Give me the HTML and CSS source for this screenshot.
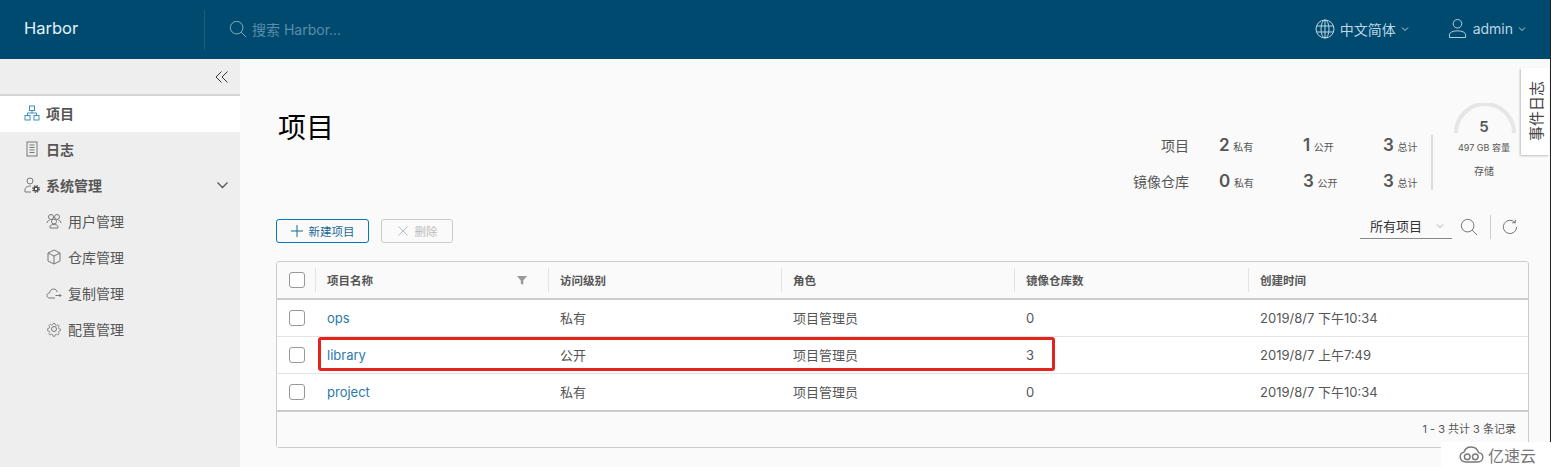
FILE: index.html
```html
<!DOCTYPE html>
<html lang="zh-CN">
<head>
  <meta charset="UTF-8">
  <title>Harbor</title>
  <link rel="stylesheet" href="styles.css">
</head>
<body>
  <header class="topbar">
    <div class="brand">Harbor</div>
    <div class="search">
      <svg class="search-icon" viewBox="0 0 20 20"><circle cx="8.5" cy="8.5" r="7"/><path d="M13.5 13.5l5.5 5.5"/></svg>
      <span>搜索 Harbor...</span>
    </div>
    <div class="top-right">
      <div class="top-item lang">
        <svg class="globe" viewBox="0 0 20 20"><circle cx="10" cy="10" r="9"/><ellipse cx="10" cy="10" rx="4" ry="9"/><path d="M10 1v18M1.8 7h16.4M1.8 13h16.4"/></svg>
        <span>中文简体</span>
        <svg class="caret" viewBox="0 0 8 6"><path d="M1 1.5l3 3 3-3"/></svg>
      </div>
      <div class="top-item user">
        <svg class="avatar" viewBox="0 0 20 22"><circle cx="10" cy="6" r="4.5"/><path d="M1.5 20.5v-3c0-2.5 4-4 8.500-4s8.500 1.500 8.500 4v3z"/></svg>
        <span>admin</span>
        <svg class="caret" viewBox="0 0 8 6"><path d="M1 1.500l3 3 3-3"/></svg>
      </div>
    </div>
  </header>

  <div class="layout">
    <nav class="sidebar">
      <div class="collapse">
        <svg viewBox="0 0 14 14"><path d="M6.500 1.500L1 7l5.500 5.500M12.500 1.500L7 7l5.500 5.500"/></svg>
      </div>
      <a class="nav-item active">
        <svg class="nav-icon blue" viewBox="0 0 16 16"><rect x="5.500" y="1" width="5" height="4.500"/><rect x="1" y="10.500" width="5" height="4.500"/><rect x="10" y="10.500" width="5" height="4.500"/><path d="M8 5.500V8M3.500 10.500V8h9v2.500"/></svg>
        <span>项目</span>
      </a>
      <a class="nav-item">
        <svg class="nav-icon" viewBox="0 0 16 16"><rect x="3" y="1" width="10" height="14"/><path d="M5.500 4h5M5.500 6.500h5M5.500 9h5M5.500 11.500h5"/></svg>
        <span>日志</span>
      </a>
      <a class="nav-item">
        <svg class="nav-icon" viewBox="0 0 16 16"><circle cx="6" cy="4" r="3"/><path d="M1 15v-2.500C1 10.500 3.500 9 7 9M1 15h6"/><circle class="gear-ring" cx="12" cy="12" r="2"/><circle class="gear-teeth" cx="12" cy="12" r="3.300"/></svg>
        <span>系统管理</span>
        <svg class="chevron" viewBox="0 0 12 8"><path d="M1 1.500l5 5 5-5"/></svg>
      </a>
      <a class="nav-sub">
        <svg class="nav-icon" viewBox="0 0 16 16"><circle cx="5" cy="4" r="2.500"/><circle cx="11" cy="4" r="2.500"/><circle cx="8" cy="8.500" r="2.500"/><path d="M1 10c0-1.500 1-2.500 2.500-2.500M15 10c0-1.500-1-2.500-2.500-2.500M4 15v-1.500c0-1 1.500-2 4-2s4 1 4 2V15z"/></svg>
        <span>用户管理</span>
      </a>
      <a class="nav-sub">
        <svg class="nav-icon" viewBox="0 0 16 16"><path d="M8 1l6 3v8l-6 3-6-3V4zM2 4l6 3 6-3M8 7v8"/></svg>
        <span>仓库管理</span>
      </a>
      <a class="nav-sub">
        <svg class="nav-icon" viewBox="0 0 16 16"><path d="M9 13H3.500C2 13 1 12 1 10.500S2 8 3.500 8C4 5.500 5.500 4 7.500 4c2 0 3.300 1.200 3.800 3M9.500 10.500H15M13.500 9l1.500 1.500-1.500 1.500"/></svg>
        <span>复制管理</span>
      </a>
      <a class="nav-sub">
        <svg class="nav-icon" viewBox="0 0 16 16"><circle cx="8" cy="8" r="2.500"/><path d="M6.800 1h2.400l.4 2 1.500.7 1.800-1.100 1.600 1.700-1.100 1.700.6 1.500 2 .5v2.200l-2 .5-.6 1.500 1.100 1.700-1.600 1.700-1.800-1.100-1.500.6-.4 2H6.800l-.4-2-1.500-.6-1.800 1.100-1.600-1.700 1.100-1.700-.6-1.500-2-.5V7.500l2-.5.600-1.500-1.100-1.700 1.600-1.700 1.800 1.100 1.500-.7z" transform="translate(1.600 1.600) scale(.8)"/></svg>
        <span>配置管理</span>
      </a>
    </nav>

    <main class="content">
      <div class="page-head">
        <h1>项目</h1>
        <div class="summary">
          <div class="counts">
            <div class="count-row">
              <span class="count-label">项目</span>
              <span class="count"><b>2</b> <small>私有</small></span>
              <span class="count"><b>1</b> <small>公开</small></span>
              <span class="count"><b>3</b> <small>总计</small></span>
            </div>
            <div class="count-row">
              <span class="count-label">镜像仓库</span>
              <span class="count"><b>0</b> <small>私有</small></span>
              <span class="count"><b>3</b> <small>公开</small></span>
              <span class="count"><b>3</b> <small>总计</small></span>
            </div>
          </div>
          <div class="storage">
            <svg class="gauge" viewBox="0 0 62 32"><path d="M2 30A29 29 0 0 1 60 30"/></svg>
            <b>5</b>
            <div class="capacity">497 GB 容量</div>
            <div class="storage-label">存储</div>
          </div>
        </div>
      </div>

      <div class="toolbar">
        <button class="btn btn-primary">
          <svg viewBox="0 0 12 12"><path d="M6 0v12M0 6h12"/></svg>新建项目
        </button>
        <button class="btn btn-disabled">
          <svg viewBox="0 0 12 12"><path d="M1.500 1.500l9 9M10.500 1.500l-9 9"/></svg>删除
        </button>
        <div class="filter">
          <div class="select">所有项目
            <svg class="caret" viewBox="0 0 8 6"><path d="M1 1.500l3 3 3-3"/></svg>
          </div>
          <svg class="tool-icon" viewBox="0 0 20 20"><circle cx="8.500" cy="8.500" r="7"/><path d="M13.500 13.500l5.500 5.500"/></svg>
          <span class="tool-sep"></span>
          <svg class="tool-icon refresh" viewBox="0 0 18 18"><path d="M14.500 3.800A7.500 7.500 0 1 0 16.500 9M15 .8v3.500h-3.500"/></svg>
        </div>
      </div>

      <div class="grid">
        <div class="grid-row grid-head">
          <div class="cell cell-check"><span class="checkbox"></span></div>
          <div class="cell">项目名称
            <svg class="funnel" viewBox="0 0 10 10"><path d="M0 1h10L6.200 5.500V10L3.800 8.500v-3z"/></svg>
          </div>
          <div class="cell">访问级别</div>
          <div class="cell">角色</div>
          <div class="cell">镜像仓库数</div>
          <div class="cell">创建时间</div>
        </div>
        <div class="grid-row">
          <div class="cell cell-check"><span class="checkbox"></span></div>
          <div class="cell"><a class="link">ops</a></div>
          <div class="cell">私有</div>
          <div class="cell">项目管理员</div>
          <div class="cell">0</div>
          <div class="cell">2019/8/7 下午10:34</div>
        </div>
        <div class="grid-row">
          <div class="cell cell-check"><span class="checkbox"></span></div>
          <div class="cell"><a class="link">library</a></div>
          <div class="cell">公开</div>
          <div class="cell">项目管理员</div>
          <div class="cell">3</div>
          <div class="cell">2019/8/7 上午7:49</div>
        </div>
        <div class="grid-row">
          <div class="cell cell-check"><span class="checkbox"></span></div>
          <div class="cell"><a class="link">project</a></div>
          <div class="cell">私有</div>
          <div class="cell">项目管理员</div>
          <div class="cell">0</div>
          <div class="cell">2019/8/7 下午10:34</div>
        </div>
        <div class="grid-foot">1 - 3 共计 3 条记录</div>
        <div class="highlight"></div>
      </div>
    </main>
  </div>

  <div class="event-tab"><span>事件日志</span></div>

  <div class="watermark">
    <svg viewBox="0 0 26 18"><path d="M7 17C3.500 17 1 14.500 1 11.500 1 9 2.800 7 5 6.500 6 3 9 1 12.500 1 16.500 1 19.500 3.500 20.500 7 23.300 7.500 25 9.300 25 12c0 3-2.500 5-5.500 5z"/><circle cx="8.500" cy="11.500" r="3"/><circle cx="17" cy="11.500" r="3"/></svg>
    <span>亿速云</span>
  </div>
</body>
</html>
```

FILE: styles.css
```css
:root {
  --header-bg: #004a70;
  --link-color: #0079b8;
  --border-color: #ccc;
  --text-color: #565656;
}

* {
  box-sizing: border-box;
}

html, body {
  height: 100%;
}

body {
  margin: 0;
  overflow: hidden;
  position: relative;
  font-family: Inter, "Noto Sans CJK SC", sans-serif;
  font-size: 13px;
  color: var(--text-color);
  background-color: #fafafa;
}

/* dark edge of the captured window */
body::after {
  content: "";
  position: absolute;
  top: 0;
  right: 0;
  width: 1px;
  height: 442px;
  background-color: #222;
}

svg {
  fill: none;
  stroke: currentColor;
  stroke-width: 1;
  flex-shrink: 0;
}

/* top bar */
.topbar {
  display: flex;
  align-items: center;
  height: 59px;
  background-color: var(--header-bg);
  color: #fff;
}

.brand {
  width: 205px;
  height: 40px;
  line-height: 36px;
  padding-left: 24px;
  font-size: 16.500px;
  color: #e3f5fc;
  border-right: 1px solid #1a5d80;
}

.search {
  display: flex;
  align-items: center;
  gap: 5px;
  margin-left: 24px;
  padding-bottom: 1px;
  font-size: 14px;
  color: #5b8ea8;
}

.search-icon {
  width: 18px;
  height: 18px;
  color: #8fb8cc;
}

.top-right {
  display: flex;
  align-items: center;
  margin-left: auto;
  padding-right: 25px;
  padding-bottom: 2px;
  color: #bcd6e3;
}

.top-item {
  display: flex;
  align-items: center;
  gap: 5px;
  font-size: 14px;
}

.lang {
  margin-right: 39px;
}

.globe {
  width: 20px;
  height: 20px;
}

.avatar {
  width: 19px;
  height: 21px;
  margin-right: 1px;
}

.caret {
  width: 8px;
  height: 6px;
}

/* side nav */
.layout {
  display: flex;
  height: 408px;
}

.sidebar {
  width: 240px;
  flex-shrink: 0;
  background-color: #eee;
}

.collapse {
  display: flex;
  justify-content: flex-end;
  align-items: center;
  height: 37px;
  padding-right: 11px;
  border-bottom: 2px solid #d5d5d5;
  color: #333;
}

.collapse svg {
  width: 14px;
  height: 14px;
}

.nav-item, .nav-sub {
  display: flex;
  align-items: center;
  height: 36px;
  padding-bottom: 2px;
  color: #565656;
}

.nav-item {
  gap: 6px;
  padding-left: 24px;
  font-weight: 700;
  font-size: 14px;
}

.nav-sub {
  gap: 6px;
  padding-left: 46px;
  font-size: 14px;
}

.nav-item.active {
  background-color: #fff;
}

.nav-icon {
  width: 16px;
  height: 16px;
  color: #777;
}

.nav-icon.blue {
  color: #3a8fc0;
}

.gear-ring {
  stroke: #444;
  stroke-width: 1.500;
}

.gear-teeth {
  stroke: #444;
  stroke-width: 1.300;
  stroke-dasharray: 1.300 1.300;
}

.chevron {
  width: 13px;
  height: 8px;
  margin-left: auto;
  margin-right: 11px;
  stroke-width: 1.300;
  color: #555;
}

/* page */
.content {
  flex: 1;
  min-width: 0;
  padding: 0 22px 0 36px;
}

.page-head {
  display: flex;
  justify-content: space-between;
  height: 157px;
}

h1 {
  margin: 50px 0 0 2px;
  font-size: 28px;
  font-weight: 400;
  line-height: 38px;
  color: #000;
}

.summary {
  display: flex;
  padding-top: 44px;
}

.counts {
  margin-top: 32px;
  padding-right: 15px;
  border-right: 2px solid #ddd;
  height: 55px;
}

.count-row {
  display: flex;
  align-items: center;
  height: 36px;
  margin-top: -8px;
}

.count-row + .count-row {
  margin-top: 0;
}

.count-label {
  width: 60px;
  text-align: right;
  margin-right: 30px;
  font-size: 14px;
}

.count {
  display: inline-block;
  width: 84px;
  white-space: nowrap;
}

.count + .count {
  width: 80px;
}

.count:last-child {
  width: 33px;
}

.count b {
  font-size: 17px;
  font-weight: 600;
}

.count small {
  font-size: 10px;
}

.storage {
  position: relative;
  width: 96px;
  text-align: center;
  padding-left: 6px;
  padding-top: 15px;
}

.storage b {
  display: block;
  font-size: 15px;
  font-weight: 600;
  line-height: 18px;
}

.gauge {
  position: absolute;
  top: 0;
  left: 21px;
  width: 62px;
  height: 32px;
  stroke: #e6e6e6;
  stroke-width: 4;
}

.capacity {
  font-size: 9px;
  line-height: 14px;
  margin-top: 5px;
}

.storage-label {
  font-size: 10px;
  line-height: 14px;
  margin-top: 9px;
}

/* toolbar */
.toolbar {
  display: flex;
  align-items: center;
  gap: 12px;
  height: 24px;
  margin-top: 3px;
  margin-bottom: 18px;
}

.btn {
  display: flex;
  align-items: center;
  justify-content: center;
  gap: 6px;
  height: 24px;
  padding: 0;
  background: transparent;
  border-radius: 3px;
  font-family: inherit;
  font-size: 11.500px;
}

.btn svg {
  width: 12px;
  height: 12px;
}

.btn-primary {
  width: 93px;
  border: 1px solid var(--link-color);
  color: #1a6a94;
}

.btn-disabled {
  width: 72px;
  border: 1px solid #ccc;
  color: #bbb;
}

.filter {
  display: flex;
  align-items: center;
  margin-left: auto;
  margin-bottom: 8px;
  padding-right: 11px;
}

.select {
  display: flex;
  align-items: center;
  justify-content: space-between;
  width: 92px;
  height: 24px;
  padding: 0 8px 2px 10px;
  border-bottom: 1px solid #888;
  font-size: 13px;
  color: #333;
}

.select .caret {
  color: #aaa;
}

.tool-icon {
  width: 18px;
  height: 18px;
  color: #666;
  margin-left: 8px;
}

.tool-sep {
  width: 1px;
  height: 24px;
  margin-left: 12px;
  background-color: #ccc;
}

.tool-icon.refresh {
  width: 16px;
  height: 16px;
  margin-left: 11px;
}

/* data grid */
.grid {
  position: relative;
  width: 1253px;
  height: 187px;
  border: 1px solid var(--border-color);
  border-radius: 3px;
  background-color: #fff;
}

.grid-row {
  display: grid;
  grid-template-columns: 38px 233px 233px 233px 234px 1fr;
  height: 37px;
  border-bottom: 1px solid #e3e3e3;
  font-size: 13px;
}

.grid-row:nth-child(4) {
  height: 38px;
  border-bottom: 2px solid var(--border-color);
}

.grid-head {
  height: 38px;
  background-color: #fafafa;
  border-bottom: 2px solid var(--border-color);
  font-size: 11.500px;
  font-weight: 700;
  border-radius: 3px 3px 0 0;
}

.cell {
  display: flex;
  align-items: center;
  padding-left: 12px;
  padding-bottom: 1px;
  min-width: 0;
}

.grid-head .cell {
  position: relative;
}

.grid-head .cell::before {
  content: "";
  position: absolute;
  left: 0;
  top: 6px;
  bottom: 6px;
  width: 1px;
  background-color: #e3e3e3;
}

.grid-head .cell-check::before {
  display: none;
}

.checkbox {
  width: 16px;
  height: 16px;
  border: 1px solid #999;
  border-radius: 3px;
  background-color: #fff;
}

.funnel {
  width: 10px;
  height: 10px;
  margin-left: auto;
  margin-right: 21px;
  fill: #999;
  stroke: none;
}

.link {
  color: #2a79ad;
}

.grid-foot {
  height: 35px;
  padding-right: 12px;
  background-color: #fafafa;
  text-align: right;
  line-height: 35px;
  font-size: 11px;
}

.highlight {
  position: absolute;
  left: 41px;
  top: 75px;
  width: 737px;
  height: 34px;
  border: 3px solid #e5231d;
  border-radius: 3px;
}

/* overlays */
.event-tab {
  position: absolute;
  top: 68px;
  left: 1521px;
  width: 28px;
  height: 87px;
  display: flex;
  align-items: center;
  justify-content: center;
  background-color: #fff;
  box-shadow: -1px 1px 2px rgba(0, 0, 0, 0.25);
  color: #444;
  font-size: 15px;
}

.event-tab span {
  writing-mode: vertical-rl;
  text-orientation: sideways;
  transform: rotate(180deg);
  white-space: nowrap;
}

.watermark {
  position: absolute;
  right: 0;
  bottom: 0;
  width: 110px;
  height: 25px;
  padding-left: 18px;
  display: flex;
  align-items: center;
  gap: 4px;
  background-color: #fff;
  color: #777;
  font-size: 16px;
}

.watermark svg {
  width: 25px;
  height: 17px;
  stroke-width: 1.500;
}
```
